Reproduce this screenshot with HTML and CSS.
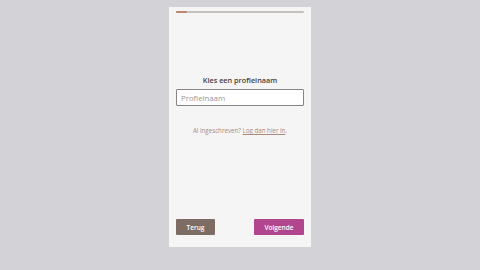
FILE: index.html
```html
<!DOCTYPE html>
<html lang="nl">
<head>
    <meta charset="UTF-8">
    <meta name="viewport" content="width=device-width, initial-scale=1.0">
    <title>Profielnaam</title>
    <link rel="stylesheet" href="styles.css">
</head>
<body>
    <div class="card">
        <div class="progress"><div class="progress-fill"></div></div>

        <div class="step">
            <h1 class="step-title">Kies een profielnaam</h1>
            <input class="name-input" type="text" placeholder="Profielnaam" autofocus>
            <p class="login-hint">Al ingeschreven? <a href="#">Log dan hier in</a>.</p>
        </div>

        <div class="actions">
            <button class="btn btn-back">Terug</button>
            <button class="btn btn-next">Volgende</button>
        </div>
    </div>
</body>
</html>
```

FILE: styles.css
```css
body {
    font-family: 'Open Sans', 'Noto Sans', sans-serif;
    margin: 0;
    height: 100vh;
    background: #d3d3d7;
    display: flex;
    justify-content: center;
    align-items: flex-start;
}
.card {
    width: 142px;
    height: 240px;
    margin-top: 7px;
    background: #f5f5f5;
    box-sizing: border-box;
    padding: 4px 7px 12px;
    display: flex;
    flex-direction: column;
}
.progress {
    height: 2px;
    background: #c4c0bd;
    border-radius: 1px;
}
.progress-fill {
    width: 11px;
    height: 100%;
    background: #b98a6e;
    border-radius: 1px;
}
.step {
    flex: 1;
    display: flex;
    flex-direction: column;
    align-items: center;
    padding-top: 62px;
}
.step-title {
    margin: 0 0 3px;
    font-size: 7.3px;
    font-weight: 600;
    color: #4a3d37;
    line-height: 11px;
}
.name-input {
    width: 100%;
    box-sizing: border-box;
    height: 17px;
    border: 1px solid #8a8583;
    border-radius: 1px;
    background: #fff;
    padding: 0 4px;
    font-family: inherit;
    font-size: 7.8px;
    color: #333;
    outline: none;
}
.name-input::placeholder {
    color: #9a9593;
}
.login-hint {
    margin: 20px 0 0;
    font-size: 6.2px;
    color: #a8897a;
}
.login-hint a {
    color: #a8897a;
}
.actions {
    display: flex;
    justify-content: space-between;
}
.btn {
    height: 16px;
    border: none;
    border-radius: 1px;
    color: #fff;
    font-family: inherit;
    font-size: 6.5px;
    font-weight: 600;
    padding: 0;
    cursor: pointer;
}
.btn-back {
    width: 39px;
    background: #7d6c63;
}
.btn-next {
    width: 50px;
    background: #b1468e;
}
```
